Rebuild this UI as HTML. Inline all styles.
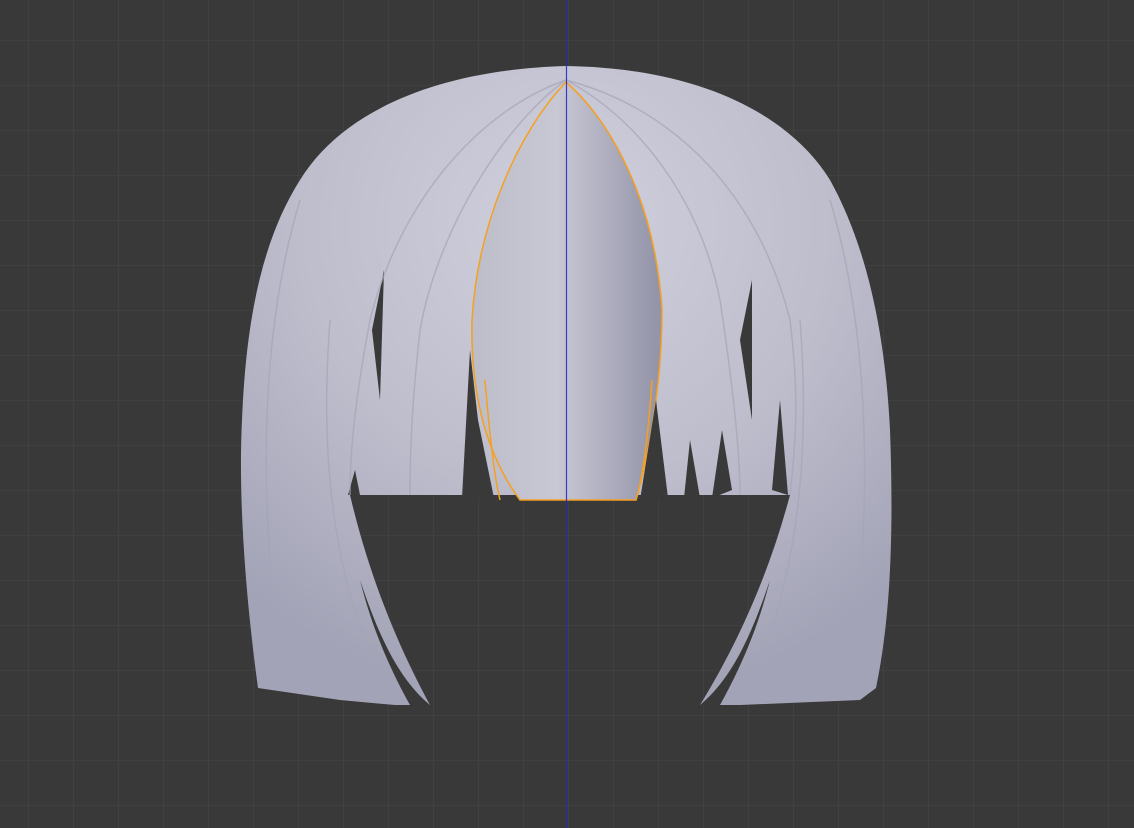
<!DOCTYPE html>
<html><head><style>html,body{margin:0;padding:0;background:#393939;}svg{display:block}</style></head>
<body>
<svg width="1134" height="828" viewBox="0 0 1134 828" xmlns="http://www.w3.org/2000/svg">
<defs>
<pattern id="g" x="28" y="40" width="45" height="45" patternUnits="userSpaceOnUse">
<path d="M0 0H45M0 0V45" stroke="#424242" stroke-width="1.5" fill="none"/>
</pattern>
<radialGradient id="h" cx="0.5" cy="0.25" r="0.75">
<stop offset="0" stop-color="#d0d0dd"/>
<stop offset="0.55" stop-color="#bdbdcc"/>
<stop offset="1" stop-color="#a3a3b7"/>
</radialGradient>
<linearGradient id="c" x1="0" y1="0" x2="1" y2="0">
<stop offset="0" stop-color="#bdbdca"/>
<stop offset="0.45" stop-color="#c8c8d4"/>
<stop offset="1" stop-color="#9292a8"/>
</linearGradient>
</defs>
<rect width="1134" height="828" fill="#393939"/>
<rect width="1134" height="828" fill="url(#g)"/>
<path fill="url(#h)" d="M258 688 C246 600 238 500 242 420 C246 320 262 240 300 180 C340 115 430 70 566 66 C700 68 790 115 830 180 C866 245 885 330 890 430 C894 540 890 620 876 688 L860 700 L740 705 L700 705 C740 640 770 570 790 495 L350 495 C370 580 400 650 430 705 L395 705 L340 700 Z"/>
<path fill="url(#c)" d="M566 82 C520 130 478 220 472 320 C470 400 490 460 520 500 L636 500 C650 450 662 380 662 310 C655 200 610 120 566 82 Z" stroke="#f5a020" stroke-width="1.5"/>
<g fill="#393939">
<path d="M348 495 L355 470 L360 495 Z"/>
<path d="M462 498 L470 350 L478 420 L494 498 Z"/>
<path d="M640 500 L656 400 L668 498 Z"/>
<path d="M684 498 L690 440 L700 498 Z"/>
<path d="M712 498 L722 430 L732 490 Z"/>
<path d="M772 490 L780 400 L788 495 Z"/>
<path d="M372 330 L384 270 L380 400 Z"/>
<path d="M740 340 L752 280 L752 420 Z"/>
<path d="M360 580 C380 640 400 680 430 705 L410 705 C385 660 370 620 360 580 Z"/>
<path d="M770 580 C750 640 730 680 700 705 L720 705 C745 660 760 620 770 580 Z"/>
</g>
<g fill="none" stroke="#a5a5b8" stroke-width="1.5" opacity="0.7">
<path d="M566 80 C480 110 400 200 370 320 C355 400 350 450 350 495"/>
<path d="M566 80 C510 120 440 220 420 330 C410 420 410 470 410 495"/>
<path d="M566 80 C640 120 700 200 720 300 C735 400 740 460 740 495"/>
<path d="M566 80 C680 110 760 200 790 320 C800 400 795 450 790 495"/>
<path d="M300 200 C270 300 260 420 270 560 C275 620 285 660 300 690"/>
<path d="M830 200 C860 300 870 420 862 560 C858 620 850 660 840 695"/>
<path d="M330 320 C320 450 330 580 390 700"/>
<path d="M800 320 C810 450 800 580 745 700"/>
</g>
<path fill="none" stroke="#f5a020" stroke-width="1.5" d="M485 380 C490 440 495 480 500 500 M652 380 C648 440 642 480 636 500"/>
<line x1="566.5" y1="0" x2="566.5" y2="828" stroke="#2a2ac8" stroke-width="1.2" opacity="0.9"/>
</svg>
</body></html>
